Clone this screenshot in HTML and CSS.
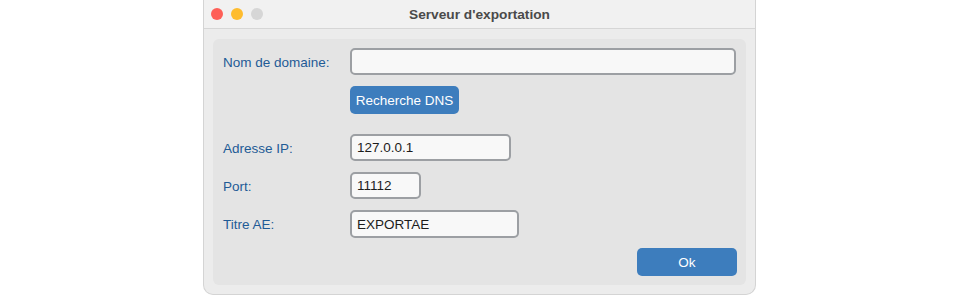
FILE: index.html
```html
<!DOCTYPE html>
<html lang="fr">
<head>
<meta charset="utf-8">
<title>Serveur d'exportation</title>
<link rel="stylesheet" href="styles.css">
</head>
<body>
<div class="window">
  <div class="titlebar">
    <div class="lights">
      <span class="light red"></span>
      <span class="light yellow"></span>
      <span class="light gray"></span>
    </div>
    <div class="title">Serveur d'exportation</div>
  </div>
  <div class="content">
    <div class="panel">
      <div class="row row-domain">
        <label class="label">Nom de domaine:</label>
        <div class="field field-domain"></div>
      </div>
      <div class="row row-dns">
        <span class="label"></span>
        <button class="btn btn-dns">Recherche DNS</button>
      </div>
      <div class="row row-ip">
        <label class="label">Adresse IP:</label>
        <div class="field field-ip">127.0.0.1</div>
      </div>
      <div class="row row-port">
        <label class="label">Port:</label>
        <div class="field field-port">11112</div>
      </div>
      <div class="row row-ae">
        <label class="label">Titre AE:</label>
        <div class="field field-ae">EXPORTAE</div>
      </div>
      <div class="row row-ok">
        <button class="btn btn-ok">Ok</button>
      </div>
    </div>
  </div>
</div>
</body>
</html>
```

FILE: styles.css
```css
html, body {
  margin: 0;
  padding: 0;
  background: #ffffff;
  font-family: "Liberation Sans", Arial, sans-serif;
}

.window {
  margin-left: 203px;
  width: 553px;
  height: 295px;
  box-sizing: border-box;
  border: 1px solid #d4d4d4;
  border-top: none;
  border-radius: 0 0 10px 10px;
  background: #ececec;
  display: flex;
  flex-direction: column;
  overflow: hidden;
}

.titlebar {
  height: 28px;
  flex: none;
  background: #f1f1f1;
  border-bottom: 1px solid #d6d6d6;
  position: relative;
  display: flex;
  align-items: center;
  justify-content: center;
}

.lights {
  position: absolute;
  left: 7px;
  top: 8px;
  display: flex;
  gap: 8px;
}

.light {
  width: 12px;
  height: 12px;
  border-radius: 50%;
  display: block;
}
.red { background: #fe5f57; }
.yellow { background: #febc2e; }
.gray { background: #d6d6d6; }

.title {
  font-weight: bold;
  font-size: 13.7px;
  color: #4a4a4a;
  padding-top: 1px;
}

.content {
  flex: 1;
  padding: 10px 9px 9px 9px;
  display: flex;
}

.panel {
  flex: 1;
  background: #e4e4e4;
  border-radius: 6px;
  padding: 9px 9px 9px 10px;
  display: flex;
  flex-direction: column;
}

.row {
  display: flex;
  align-items: center;
}

.label {
  width: 127px;
  flex: none;
  font-size: 13.5px;
  color: #1f5b96;
  padding-top: 1px;
}

.field {
  box-sizing: border-box;
  height: 27px;
  border: 2px solid #9c9fa3;
  border-radius: 5px;
  background: #f8f8f8;
  font-size: 13.5px;
  color: #1c1c1c;
  padding: 0 5px;
  display: flex;
  align-items: center;
}

.field-domain { width: 386px; }
.field-ip { width: 161px; }
.field-port { width: 71px; }
.field-ae { width: 169px; height: 28px; }

.row-dns { margin-top: 11px; }
.row-ip { margin-top: 20px; }
.row-port { margin-top: 11px; }
.row-ae { margin-top: 11px; }
.row-ok { margin-top: 10px; justify-content: flex-end; }

.btn {
  border: none;
  background: #3d7dbd;
  color: #ffffff;
  font-family: "Liberation Sans", Arial, sans-serif;
  font-size: 13.5px;
  border-radius: 5px;
  height: 28px;
  padding: 0;
}

.btn-dns { width: 109px; }
.btn-ok { width: 100px; }
```
